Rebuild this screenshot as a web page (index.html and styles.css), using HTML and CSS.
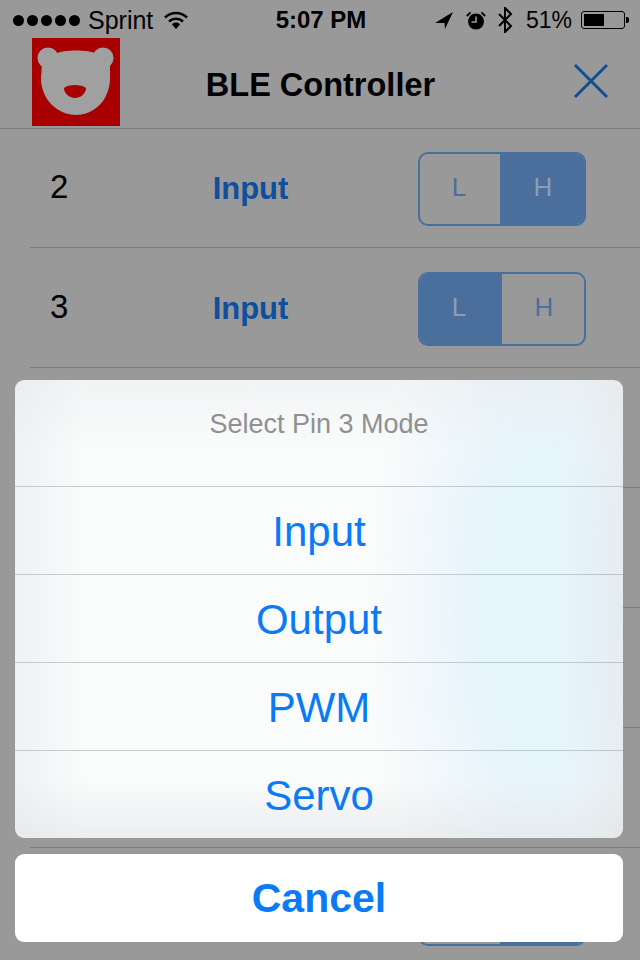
FILE: index.html
```html
<!DOCTYPE HTML><html>
<head>
  <meta name="viewport" content="width=device-width, initial-scale=1">
  <link rel="stylesheet" href="styles.css">
</head>
<body>
  <div class="status">
    <div class="status-left">
      <span class="dots"><i></i><i></i><i></i><i></i><i></i></span>
      <span class="carrier">Sprint</span>
      <svg class="wifi" width="24" height="18" viewBox="0 0 24 18">
        <path d="M1 6.5C7.5 .5 16.500 .5 23 6.500" fill="none" stroke="#000" stroke-width="2.600"/>
        <path d="M5 10.500C9 6.800 15 6.800 19 10.500" fill="none" stroke="#000" stroke-width="2.600"/>
        <path d="M7.800 13.200C10.200 10.800 13.800 10.800 16.200 13.200L12 18Z"/>
      </svg>
    </div>
    <div class="time">5:07 PM</div>
    <div class="status-right">
      <svg width="18" height="17" viewBox="0 0 18 17"><path d="M18 0L0 11H9.500L10 17Z"/></svg>
      <svg class="alarm" width="20" height="19" viewBox="0 0 20 19">
        <circle cx="10" cy="10.500" r="8"/>
        <path d="M10 5.500V11H5.500" fill="none" stroke="#999" stroke-width="1.600"/>
        <path d="M.8 5L4.500 1.300M19.200 5L15.500 1.300" stroke="#000" stroke-width="1.800"/>
      </svg>
      <svg class="bt" width="16" height="26" viewBox="0 0 16 26"><path d="M2 7L14 19L8 25V1L14 7L2 19" fill="none" stroke="#000" stroke-width="2"/></svg>
      <span class="battery-text">51%</span>
      <span class="battery"><span class="battery-fill"></span></span>
    </div>
  </div>

  <div class="nav">
    <svg class="logo" width="88" height="88" viewBox="0 0 88 88">
      <rect width="88" height="88" fill="#a80000"/>
      <circle cx="16" cy="20" r="10.500" fill="#a0a0a0"/>
      <circle cx="71" cy="20" r="10.500" fill="#a0a0a0"/>
      <path d="M10 26C14 8 74 8 78 26V40C78 62 62 77 44 77C26 77 9 62 9 40Z" fill="#a0a0a0"/>
      <path d="M32 50C36 46 50 46 54 50C54 56 48 60 43 60C38 60 32 56 32 50Z" fill="#a80000"/>
    </svg>
    <div class="title">BLE Controller</div>
    <svg class="close" width="36" height="36" viewBox="0 0 36 36"><path d="M2 2L34 34M34 2L2 34" stroke="#0f4f96" stroke-width="3"/></svg>
  </div>

  <div class="list">
    <div class="row"><span class="pin">2</span><span class="mode">Input</span><div class="toggle"><span>L</span><span class="on">H</span></div></div>
    <div class="row"><span class="pin">3</span><span class="mode">Input</span><div class="toggle"><span class="on">L</span><span>H</span></div></div>
    <div class="row"></div>
    <div class="row"></div>
    <div class="row"></div>
    <div class="row"></div>
    <div class="row"><div class="toggle"><span></span><span class="on"></span></div></div>
  </div>

  <div class="sheet">
    <div class="sheet-group">
      <div class="sheet-title">Select Pin 3 Mode</div>
      <div class="sheet-item">Input</div>
      <div class="sheet-item">Output</div>
      <div class="sheet-item">PWM</div>
      <div class="sheet-item">Servo</div>
    </div>
    <div class="sheet-cancel">Cancel</div>
  </div>
</body>
</html>
```

FILE: styles.css
```css
html {font-family: "Liberation Sans", Arial, sans-serif;}
body {position: relative; width: 640px; height: 960px; margin: 0; overflow: hidden; background-color: #999; color: #000;}

.status {display: grid; grid-template-columns: 1fr auto 1fr; align-items: center; height: 38px; padding: 2px 11px 0 13px; box-sizing: border-box; font-size: 25px;}
.status-left {display: flex; align-items: center;}
.dots {display: flex; gap: 3px; margin-right: 8px;}
.dots i {display: block; width: 11px; height: 11px; border-radius: 50%; background-color: #000;}
.wifi {margin-left: 11px;}
.time {font-weight: bold; font-size: 24px;}
.status-right {display: flex; align-items: center; justify-content: flex-end;}
.alarm {margin-left: 13px;}
.bt {margin-left: 11px;}
.battery-text {margin-left: 13px; font-size: 23px;}
.battery {position: relative; display: block; width: 44px; height: 18px; margin-left: 9px; margin-right: 4px; border: 1px solid #000; border-radius: 3px; box-sizing: border-box; padding: 2px;}
.battery:after {position: absolute; content: ""; right: -5px; top: 5px; width: 3px; height: 6px; background-color: #000; border-radius: 0 2px 2px 0;}
.battery-fill {display: block; width: 20px; height: 100%; background-color: #000;}

.nav {display: grid; grid-template-columns: 1fr auto 1fr; align-items: center; height: 91px; padding: 0 31px 0 32px; border-bottom: 1px solid #7c7c7c; box-sizing: border-box;}
.logo {align-self: start;}
.title {font-size: 32.500px; font-weight: bold; padding-top: 4px;}
.close {justify-self: end; margin-bottom: 4px;}

.list {margin-top: -1px;}
.row {display: flex; align-items: center; height: 120px; margin-left: 30px; padding: 3px 54px 0 20px; border-bottom: 1px solid #7c7c7c; box-sizing: border-box;}
.pin {width: 108px; padding-bottom: 5px; box-sizing: border-box; font-size: 33px;}
.mode {width: 185px; text-align: center; font-size: 31px; font-weight: bold; color: #0f4f9c;}
.toggle {display: flex; width: 168px; height: 74px; margin-left: auto; border: 2px solid #4a6f9c; border-radius: 10px; box-sizing: border-box; overflow: hidden; font-size: 26px; color: #4a6f9c;}
.toggle span {flex: 1; display: flex; align-items: center; justify-content: center; padding-bottom: 3px; padding-left: 2px; box-sizing: border-box;}
.toggle span:first-child {flex: 0 0 80px; padding-left: 0; padding-right: 2px;}
.toggle .on {background-color: #4a6f9c; color: #8a9db6;}
.toggle .on:first-child {flex-basis: 82px; padding-right: 4px;}

.sheet {position: absolute; left: 15px; top: 380px; width: 608px;}
.sheet-group {border-radius: 9px; overflow: hidden; background-color: #fafbfb;
  background-image:
    linear-gradient(90deg, rgba(225,227,229,.4), rgba(225,227,229,0) 70px, rgba(225,227,229,0) 555px, rgba(225,227,229,.5)),
    linear-gradient(180deg, rgba(225,227,229,.3), rgba(225,227,229,0) 70px, rgba(225,227,229,0) 400px, rgba(225,227,229,.55)),
    radial-gradient(ellipse 170px 440px at 525px 230px, #e6f4fb 35%, rgba(230,244,251,0));}
.sheet-title {display: flex; align-items: center; justify-content: center; height: 106px; padding-bottom: 18px; box-sizing: border-box; font-size: 27px; color: #8f9091;}
.sheet-item {display: flex; align-items: center; justify-content: center; height: 88px; padding-top: 3px; border-top: 1px solid rgba(120,135,150,.4); box-sizing: border-box; font-size: 42px; color: #0a7af5;}
.sheet-cancel {display: flex; align-items: center; justify-content: center; height: 88px; margin-top: 16px; border-radius: 9px; background-color: #fff; font-size: 41px; font-weight: bold; color: #0a7af5;}
```
